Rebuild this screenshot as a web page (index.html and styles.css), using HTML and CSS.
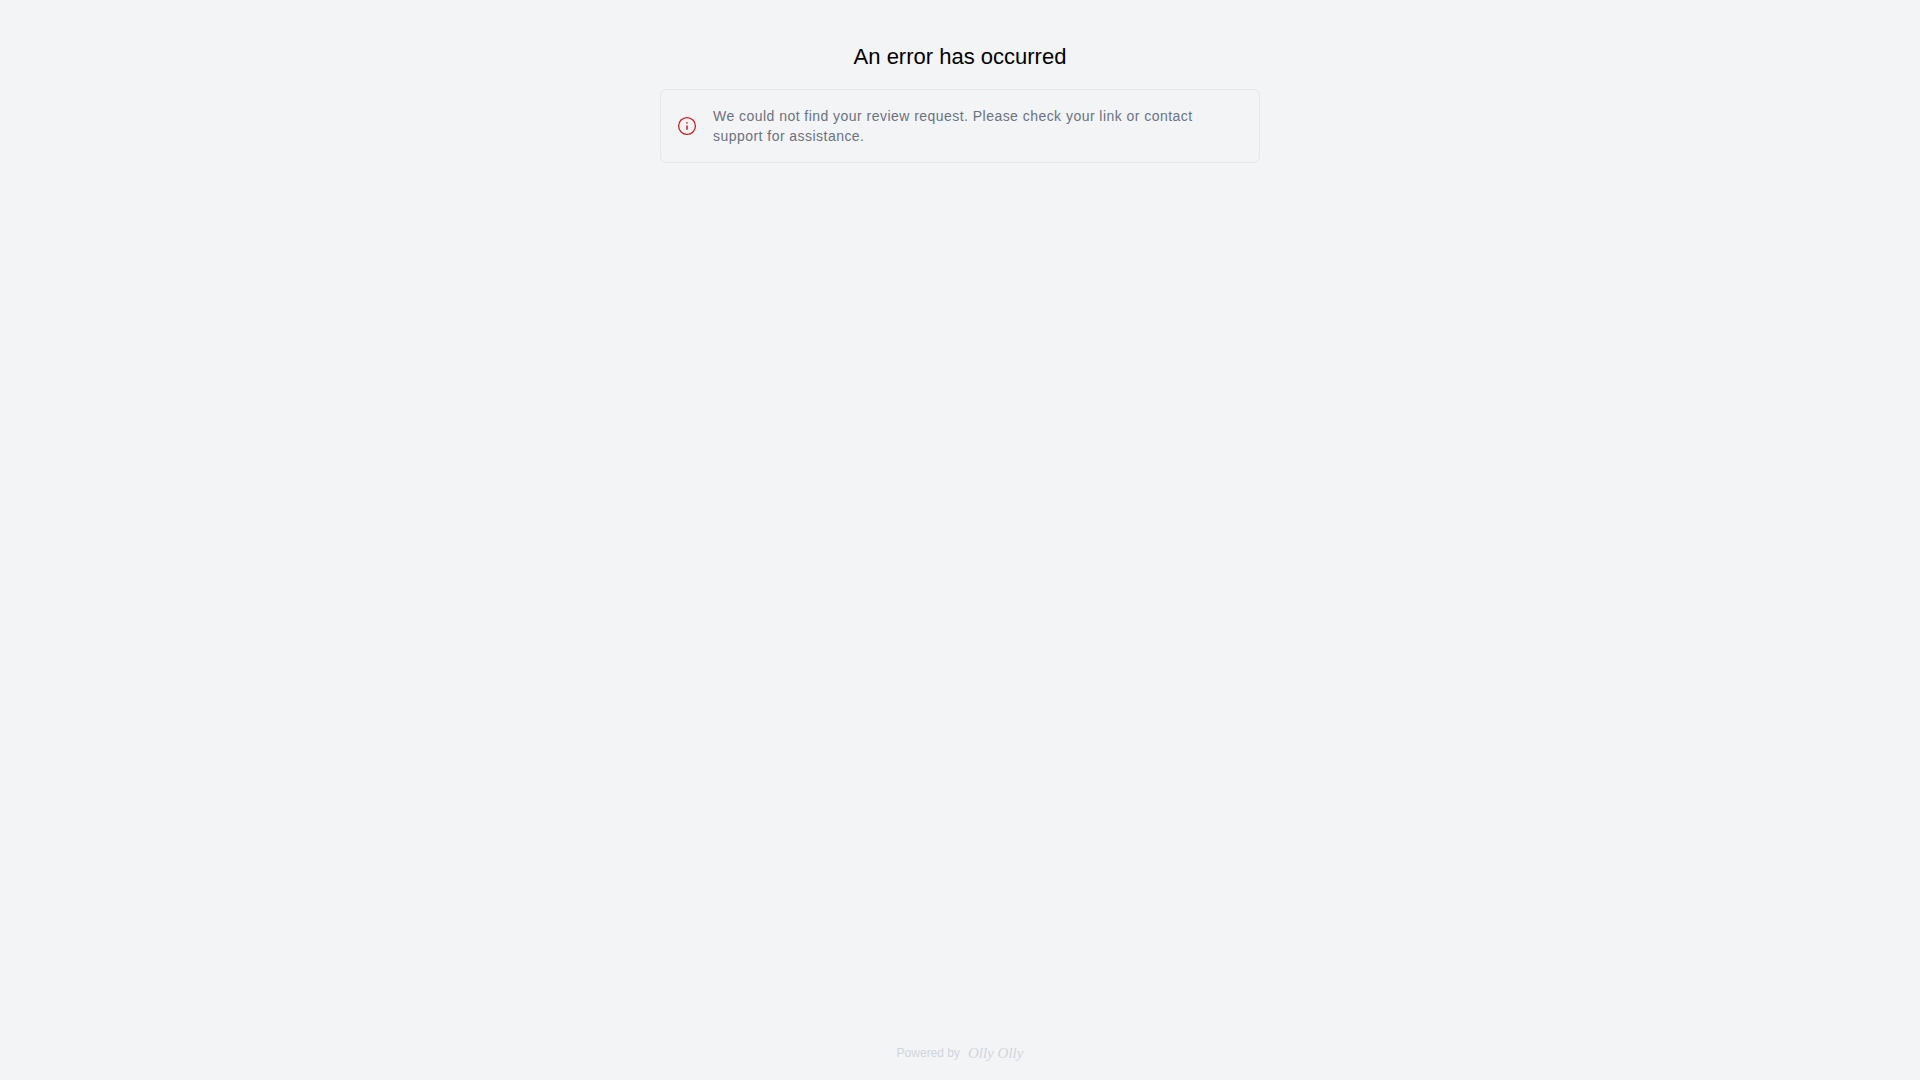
FILE: index.html
```html
<!DOCTYPE html>
<html lang="en">
<head>
<meta charset="UTF-8" />
<meta name="viewport" content="width=device-width, initial-scale=1" />
<title>An error has occurred</title>
<link rel="stylesheet" href="styles.css">
</head>
<body>

<main class="content">
  <h1 class="title">An error has occurred</h1>
  <div class="alert" role="alert">
    <svg class="alert-icon" viewBox="0 0 20 20" fill="none" aria-hidden="true">
      <circle cx="10" cy="10" r="8.4" stroke="currentColor" stroke-width="1.3" />
      <path d="M10 9.4v4.4" stroke="currentColor" stroke-width="1.5" />
      <circle cx="10" cy="6.9" r="0.8" fill="currentColor" />
    </svg>
    <p class="alert-text">We could not find your review request. Please check your link or contact support for assistance.</p>
  </div>
</main>

<footer class="footer">
  <span>Powered by</span>
  <span class="brand">Olly Olly</span>
</footer>

</body>
</html>
```

FILE: styles.css
```css
* { box-sizing: border-box; }
body {
  margin: 0;
  min-height: 100vh;
  display: flex;
  flex-direction: column;
  align-items: center;
  background: #f3f4f6;
  font-family: "Liberation Sans", Arial, sans-serif;
}

.content { width: 100%; max-width: 600px; padding-top: 40px; }
.title {
  margin: 0 0 16px;
  font-size: 22px;
  line-height: 33px;
  font-weight: normal;
  text-align: center;
  color: #000;
}

.alert {
  display: flex;
  align-items: center;
  gap: 16px;
  padding: 16px;
  border: 1px solid #e5e7eb;
  border-radius: 6px;
}
.alert-icon { width: 20px; height: 20px; flex-shrink: 0; color: #c81e1e; }
.alert-text {
  margin: 0;
  font-size: 14px;
  line-height: 20px;
  letter-spacing: 0.033em;
  color: #6b7280;
}

.footer {
  display: flex;
  align-items: center;
  gap: 8px;
  margin-top: auto;
  padding-bottom: 16px;
  font-size: 12px;
  line-height: 22px;
  color: #d1d5db;
}
.brand {
  font-family: "Liberation Serif", "Times New Roman", serif;
  font-size: 15px;
  font-style: italic;
}
```
